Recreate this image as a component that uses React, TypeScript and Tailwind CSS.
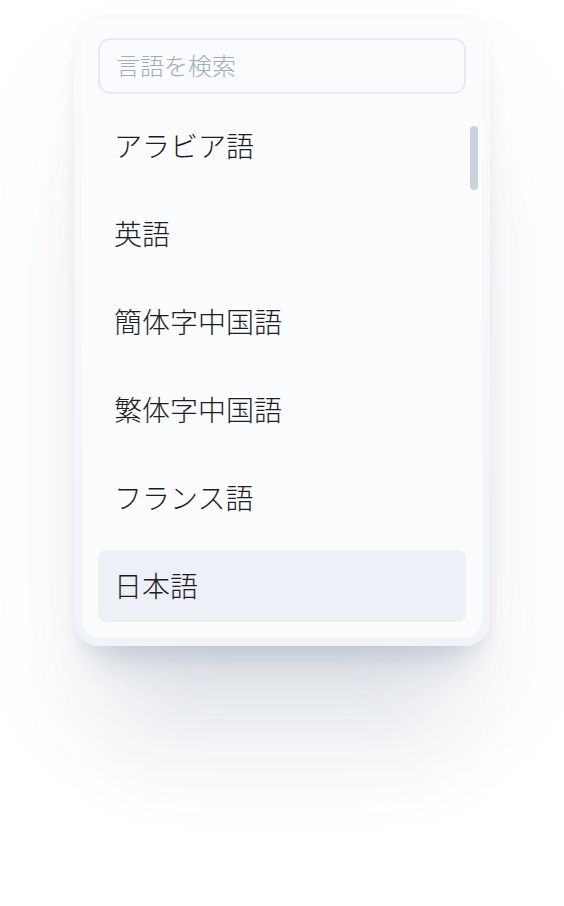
import React from "react";

const languages = ["アラビア語", "英語", "簡体字中国語", "繁体字中国語", "フランス語", "日本語"];

export default function App() {
  return (
    <div className="min-h-[906px] w-[564px] bg-white pt-[14px] pl-[74px] font-['Noto_Sans_CJK_JP','Noto_Sans',sans-serif]">
      {/* outer frame */}
      <div className="w-[416px] rounded-[26px] bg-gradient-to-b from-[#fafbfc] to-[#f0f3f7] p-2 shadow-[0_10px_15px_-3px_rgba(100,116,139,0.10),0_36px_36px_-20px_rgba(100,116,139,0.20),0_140px_90px_-40px_rgba(100,116,139,0.12),0_70px_120px_0_rgba(100,116,139,0.07)]">
        <div className="relative flex flex-col gap-4 rounded-[18px] bg-[#fbfcfe] p-4">
          <input
            readOnly
            placeholder="言語を検索"
            className="h-14 w-full rounded-xl border-2 border-[#e7eaf1] bg-[#fafbfd] px-4 pb-[3px] text-[24px] font-light text-[#1f2128] outline-none placeholder:text-[#a3abbb]"
          />
          <ul className="flex flex-col gap-4 overflow-hidden">
            {languages.map((lang) => (
              <li
                key={lang}
                className={`flex h-[72px] items-center rounded-lg px-4 pb-[2px] text-[28px] font-light text-[#1c1d22] ${
                  lang === "日本語" ? "bg-[#edf0f7]" : ""
                }`}
              >
                {lang}
              </li>
            ))}
          </ul>
          {/* scrollbar thumb */}
          <div className="absolute left-[388px] top-[104px] h-16 w-2 rounded-full bg-[#cbd2de]" />
        </div>
      </div>
    </div>
  );
}
